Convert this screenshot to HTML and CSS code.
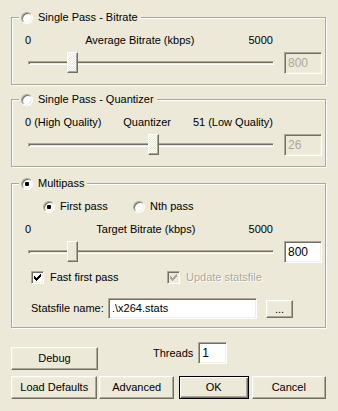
FILE: index.html
```html
<!DOCTYPE html>
<html lang="en">
  <head>
    <meta charset="UTF-8" />
    <title>x264 Configuration</title>
    <link rel="stylesheet" href="styles.css">
  </head>
  <body>
    <div class="dialog">
      <section class="group">
        <div class="legend"><span class="radio"></span>Single Pass - Bitrate</div>
        <div class="scale">
          <span>0</span>
          <span class="scale-mid">Average Bitrate (kbps)</span>
          <span class="scale-end">5000</span>
        </div>
        <div class="slider-row">
          <div class="slider">
            <div class="track"></div>
            <div class="thumb off" style="left: 39px"></div>
          </div>
          <div class="edit num off">800</div>
        </div>
      </section>

      <section class="group second">
        <div class="legend"><span class="radio"></span>Single Pass - Quantizer</div>
        <div class="scale">
          <span>0 (High Quality)</span>
          <span class="scale-mid">Quantizer</span>
          <span class="scale-end">51 (Low Quality)</span>
        </div>
        <div class="slider-row">
          <div class="slider">
            <div class="track"></div>
            <div class="thumb off" style="left: 120px"></div>
          </div>
          <div class="edit num off">26</div>
        </div>
      </section>

      <section class="group multipass">
        <div class="legend"><span class="radio on"></span>Multipass</div>
        <div class="passes">
          <label class="option first"><span class="radio on"></span>First pass</label>
          <label class="option"><span class="radio"></span>Nth pass</label>
        </div>
        <div class="scale">
          <span>0</span>
          <span class="scale-mid shifted">Target Bitrate (kbps)</span>
          <span class="scale-end">5000</span>
        </div>
        <div class="slider-row">
          <div class="slider">
            <div class="track"></div>
            <div class="thumb" style="left: 39px"></div>
          </div>
          <div class="edit num">800</div>
        </div>
        <div class="checks">
          <label class="option fast">
            <span class="check">
              <svg width="7" height="7" viewBox="0 0 7 7" shape-rendering="crispEdges"><path d="M0 2h1v3H0z M1 3h1v3H1z M2 4h1v3H2z M3 3h1v3H3z M4 2h1v3H4z M5 1h1v3H5z M6 0h1v3H6z" fill="#000"/></svg>
            </span>Fast first pass
          </label>
          <label class="option dim">
            <span class="check off">
              <svg width="7" height="7" viewBox="0 0 7 7" shape-rendering="crispEdges"><path d="M0 2h1v3H0z M1 3h1v3H1z M2 4h1v3H2z M3 3h1v3H3z M4 2h1v3H4z M5 1h1v3H5z M6 0h1v3H6z" fill="#aca899"/></svg>
            </span>Update statsfile
          </label>
        </div>
        <div class="stats">
          <span class="stats-label">Statsfile name:</span>
          <div class="edit path">.\x264.stats</div>
          <button class="btn browse">...</button>
        </div>
      </section>

      <div class="actions">
        <button class="btn wide debug">Debug</button>
        <span class="threads-label">Threads</span>
        <div class="edit threads">1</div>
      </div>
      <div class="actions bottom">
        <button class="btn wide">Load Defaults</button>
        <button class="btn advanced">Advanced</button>
        <button class="btn ok">OK</button>
        <button class="btn cancel">Cancel</button>
      </div>
    </div>
  </body>
</html>
```

FILE: styles.css
```css
body {
  margin: 0;
  width: 338px;
  height: 411px;
  background: #ece9d8;
  color: #000;
  font-family: "Liberation Sans", Arial, sans-serif;
  font-size: 11px;
  line-height: 13px;
  overflow: hidden;
}
.dialog {
  padding: 17px 12px 0 11px;
}
.group {
  box-sizing: border-box;
  height: 68px;
  border: 1px solid #aca899;
  box-shadow: inset 1px 1px #fff, 1px 1px #fff;
}
.second {
  margin-top: 14px;
}
.multipass {
  margin-top: 16px;
  height: 145px;
}
.legend {
  display: flex;
  align-items: center;
  gap: 5px;
  width: fit-content;
  height: 13px;
  margin: -7px 0 0 7px;
  padding: 0 3px 0 2px;
  background: #ece9d8;
}
.radio {
  box-sizing: border-box;
  width: 12px;
  height: 12px;
  display: flex;
  align-items: center;
  justify-content: center;
  border-radius: 50%;
  border: 1px solid;
  border-color: #aca899 #fff #fff #aca899;
  box-shadow: inset 1px 1px #716f64, inset -1px -1px #f1efe2;
  background: #fff;
  flex: none;
}
.radio.on::after {
  content: "";
  width: 4px;
  height: 4px;
  border-radius: 1px;
  background: #000;
}
.scale {
  display: flex;
  margin-top: 10px;
  padding: 0 52px 0 13px;
  white-space: nowrap;
}
.scale-mid,
.scale-end {
  margin-left: auto;
}
.shifted {
  padding-left: 12px;
}
.slider-row {
  display: flex;
  margin-top: 5px;
  padding-left: 16px;
}
.slider {
  position: relative;
  width: 246px;
  height: 22px;
}
.track {
  box-sizing: border-box;
  height: 4px;
  margin-top: 9px;
  border: 1px solid;
  border-color: #aca899 #fff #fff #aca899;
  box-shadow: inset 1px 1px #716f64;
}
.thumb {
  position: absolute;
  top: 0;
  box-sizing: border-box;
  width: 11px;
  height: 21px;
  border: 1px solid;
  border-color: #fff #716f64 #716f64 #fff;
  box-shadow: inset -1px -1px #aca899;
  background: #ece9d8;
}
.thumb.off {
  background: repeating-conic-gradient(#fff 0 25%, #ece9d8 0 50%) 0 0 / 2px 2px;
}
.edit {
  box-sizing: border-box;
  height: 22px;
  padding: 0 3px;
  display: flex;
  align-items: center;
  border: 1px solid;
  border-color: #aca899 #fff #fff #aca899;
  box-shadow: inset 1px 1px #716f64, inset -1px -1px #f1efe2;
  background: #fff;
  white-space: nowrap;
}
.num {
  width: 38px;
  margin-left: 10px;
  font-size: 12px;
}
.edit.off {
  background: #ece9d8;
  color: #aca899;
}
.passes {
  display: flex;
  margin-top: 10px;
  padding-left: 31px;
}
.option {
  display: flex;
  align-items: center;
  gap: 5px;
  height: 13px;
  white-space: nowrap;
}
.first {
  width: 90px;
}
.checks {
  display: flex;
  margin-top: 8px;
  padding-left: 19px;
}
.fast {
  width: 136px;
  gap: 6px;
}
.dim {
  color: #aca899;
  text-shadow: 1px 1px #fff;
  gap: 6px;
}
.check {
  box-sizing: border-box;
  width: 13px;
  height: 13px;
  display: flex;
  align-items: center;
  justify-content: center;
  border: 1px solid;
  border-color: #aca899 #fff #fff #aca899;
  box-shadow: inset 1px 1px #716f64, inset -1px -1px #f1efe2;
  background: #fff;
  flex: none;
}
.check.off {
  background: #ece9d8;
}
.stats {
  display: flex;
  align-items: center;
  margin-top: 14px;
  padding-left: 19px;
}
.stats-label {
  width: 77px;
  white-space: nowrap;
}
.path {
  width: 149px;
  height: 21px;
  padding-left: 3px;
  font-size: 11px;
}
.btn {
  box-sizing: border-box;
  height: 23px;
  padding: 0;
  border: 1px solid;
  border-color: #fff #716f64 #716f64 #fff;
  box-shadow: inset -1px -1px #aca899, inset 1px 1px #f1efe2;
  background: #ece9d8;
  color: #000;
  font: inherit;
  text-align: center;
}
.browse {
  width: 27px;
  height: 18px;
  margin-left: 9px;
  line-height: 10px;
}
.actions {
  display: flex;
  align-items: flex-start;
  margin-top: 14px;
}
.bottom {
  margin-top: 6px;
}
.wide {
  width: 87px;
}
.debug {
  margin-top: 5px;
}
.threads-label {
  margin: 5px 0 0 55px;
}
.threads {
  width: 29px;
  margin-left: 5px;
  font-size: 12px;
}
.advanced {
  width: 75px;
  margin-left: 2px;
}
.ok {
  width: 70px;
  margin-left: 5px;
  border: 1px solid #000;
  box-shadow: inset 1px 1px #fff, inset -1px -1px #716f64, inset -2px -2px #aca899;
}
.cancel {
  width: 75px;
  margin-left: 3px;
}
```
